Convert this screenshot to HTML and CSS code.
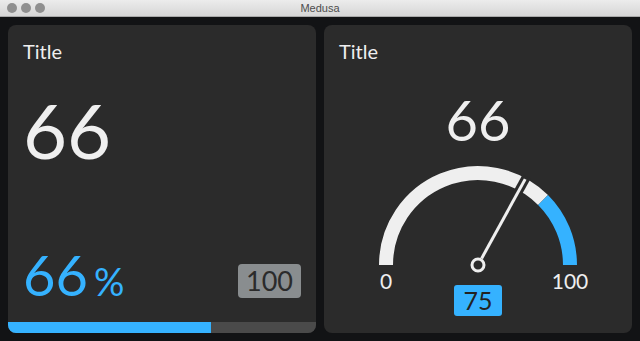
FILE: index.html
```html
<!DOCTYPE html>
<html lang="en">
<head>
    <meta charset="UTF-8">
    <meta name="viewport" content="width=device-width, initial-scale=1.0">
    <title>Medusa</title>
    <link rel="stylesheet" href="styles.css">
</head>
<body>
    <div class="titlebar">
        <div class="lights"><span></span><span></span><span></span></div>
        <div class="window-title">Medusa</div>
    </div>

    <div class="dashboard">
        <div class="card">
            <div class="card-title">Title</div>
            <div class="big-value">66</div>
            <div class="card-footer">
                <div class="percent"><span class="percent-num">66</span><span class="percent-sign">%</span></div>
                <div class="max-badge">100</div>
            </div>
            <div class="progress"><div class="progress-fill" style="width: 66%"></div></div>
        </div>

        <div class="card card-gauge">
            <div class="card-title">Title</div>
            <div class="gauge-value">66</div>
            <svg class="gauge" width="240" height="160" viewBox="0 0 240 160">
                <!-- 0..75 track, 75..100 threshold -->
                <path class="arc" d="M 28 105 A 92 92 0 0 1 185.05 39.95"/>
                <path class="arc arc-threshold" d="M 185.05 39.95 A 92 92 0 0 1 212 105"/>
                <!-- needle at 66 -->
                <line class="needle-cut" x1="157.58" y1="36.65" x2="168.66" y2="16.49"/>
                <line class="needle" x1="123.61" y1="98.43" x2="167.22" y2="19.12"/>
                <circle class="pivot" cx="120" cy="105" r="6"/>
                <text class="gauge-label" x="28" y="129">0</text>
                <text class="gauge-label" x="212" y="129">100</text>
                <rect class="threshold-box" x="96" y="125" width="48" height="31" rx="3"/>
                <text class="threshold-text" x="120" y="150">75</text>
            </svg>
        </div>
    </div>
</body>
</html>
```

FILE: styles.css
```css
body {
    margin: 0;
    width: 640px;
    height: 341px;
    background-color: #121315;
    font-family: Lato, "Open Sans", sans-serif;
    overflow: hidden;
}
.titlebar {
    display: grid;
    grid-template-columns: 1fr auto 1fr;
    align-items: center;
    height: 16px;
    background: linear-gradient(#ececec, #d6d6d6);
    border-bottom: 1px solid #a9a9a9;
}
.lights {
    display: flex;
    gap: 4px;
    padding-left: 7px;
}
.lights span {
    width: 10px;
    height: 10px;
    border-radius: 50%;
    background-color: #8f8f8f;
}
.window-title {
    font-family: "Liberation Sans", Arial, sans-serif;
    font-size: 11px;
    color: #4d4d4d;
}
.dashboard {
    display: grid;
    grid-template-columns: 308px 308px;
    gap: 8px;
    padding: 8px;
}
.card {
    display: flex;
    flex-direction: column;
    height: 308px;
    box-sizing: border-box;
    padding: 16px 15px 0;
    background-color: #2b2b2b;
    border-radius: 8px;
    overflow: hidden;
    color: #efefef;
}
.card-title {
    font-size: 20px;
    line-height: 1;
}
.big-value {
    margin-top: 31px;
    font-size: 76px;
    line-height: 1;
}
.card-footer {
    display: flex;
    justify-content: space-between;
    align-items: flex-end;
    margin-top: auto;
    margin-bottom: 19px;
}
.percent {
    color: #35b2ff;
    line-height: 1;
}
.percent-num {
    font-size: 56px;
}
.percent-sign {
    font-size: 38px;
    margin-left: 6px;
}
.max-badge {
    height: 34px;
    padding: 0 8px;
    margin-bottom: 5px;
    font-size: 27px;
    line-height: 34px;
    color: #2b2b2b;
    background-color: #898d8f;
    border-radius: 4px;
}
.progress {
    height: 11px;
    margin: 0 -15px;
    background-color: #4a4a4a;
}
.progress-fill {
    height: 100%;
    background-color: #35b2ff;
}
.gauge-value {
    margin-top: 31px;
    text-align: center;
    font-size: 56px;
    line-height: 1;
}
.gauge {
    display: block;
    align-self: center;
    margin-top: 12px;
}
.arc {
    fill: none;
    stroke: #efefef;
    stroke-width: 14;
}
.arc-threshold {
    stroke: #35b2ff;
}
.needle-cut {
    stroke: #2b2b2b;
    stroke-width: 9;
}
.needle {
    stroke: #efefef;
    stroke-width: 3;
}
.pivot {
    fill: #2b2b2b;
    stroke: #efefef;
    stroke-width: 3;
}
.gauge-label {
    fill: #efefef;
    font-size: 21px;
    text-anchor: middle;
}
.threshold-box {
    fill: #35b2ff;
}
.threshold-text {
    fill: #222;
    font-size: 25px;
    text-anchor: middle;
}
```
